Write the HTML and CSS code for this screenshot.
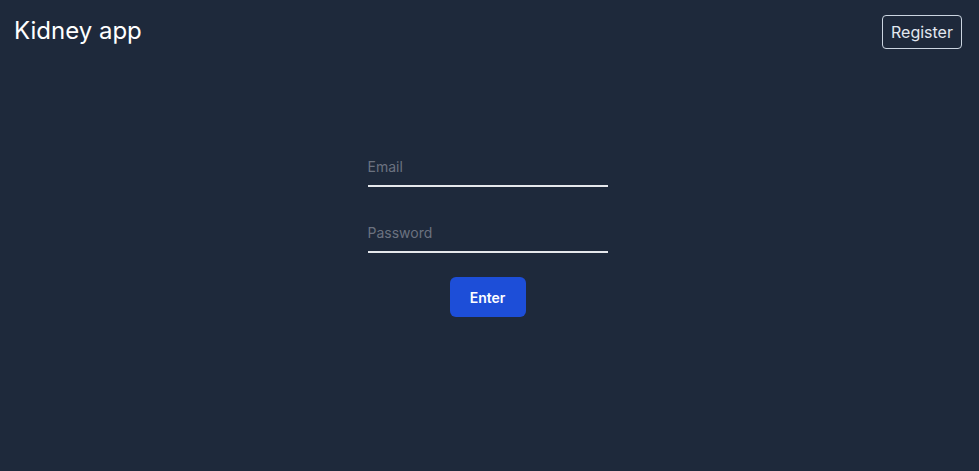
FILE: index.html
```html
<!DOCTYPE html>
<html lang="en">
<head>
<meta charset="utf-8">
<title>Kidney app</title>
<link rel="stylesheet" href="styles.css">
</head>
<body>
<header class="topbar">
  <h1 class="brand">Kidney app</h1>
  <button class="register">Register</button>
</header>
<main class="main">
  <form class="login">
    <input class="field" type="email" placeholder="Email">
    <input class="field" type="password" placeholder="Password">
    <button class="enter" type="button">Enter</button>
  </form>
</main>
</body>
</html>
```
FILE: styles.css
```css
html, body {
  margin: 0;
  padding: 0;
  height: 100%;
}
body {
  background: #1e293b;
  font-family: Inter, "Noto Sans", sans-serif;
  color: #f1f5f9;
}
.topbar {
  display: flex;
  justify-content: space-between;
  align-items: flex-start;
  padding: 15px 17px 14px 14px;
}
.brand {
  margin: 0;
  font-size: 24px;
  font-weight: 400;
  line-height: 32px;
  color: #ffffff;
}
.register {
  font-family: inherit;
  font-size: 16px;
  line-height: 24px;
  padding: 4px 8px;
  background: transparent;
  color: #e2e8f0;
  border: 1px solid #cbd5e1;
  border-radius: 4px;
  width: 80px;
}
.main {
  display: flex;
  justify-content: center;
  padding-top: 88px;
  padding-right: 4px;
}
.login {
  display: flex;
  flex-direction: column;
  align-items: center;
  width: 240px;
}
.field {
  box-sizing: border-box;
  width: 240px;
  height: 36px;
  padding: 5px 0 9px;
  margin: 0 0 30px;
  font-family: inherit;
  font-size: 14px;
  background: transparent;
  border: none;
  border-bottom: 2px solid #e5e7eb;
  color: #f1f5f9;
  outline: none;
}
.field:nth-of-type(2) {
  margin-bottom: 24px;
}
.field::placeholder {
  color: #6b7280;
}
.enter {
  width: 76px;
  height: 40px;
  border: none;
  border-radius: 6px;
  background: #1d4ed8;
  color: #ffffff;
  font-family: inherit;
  font-weight: 600;
  font-size: 14px;
}
```
